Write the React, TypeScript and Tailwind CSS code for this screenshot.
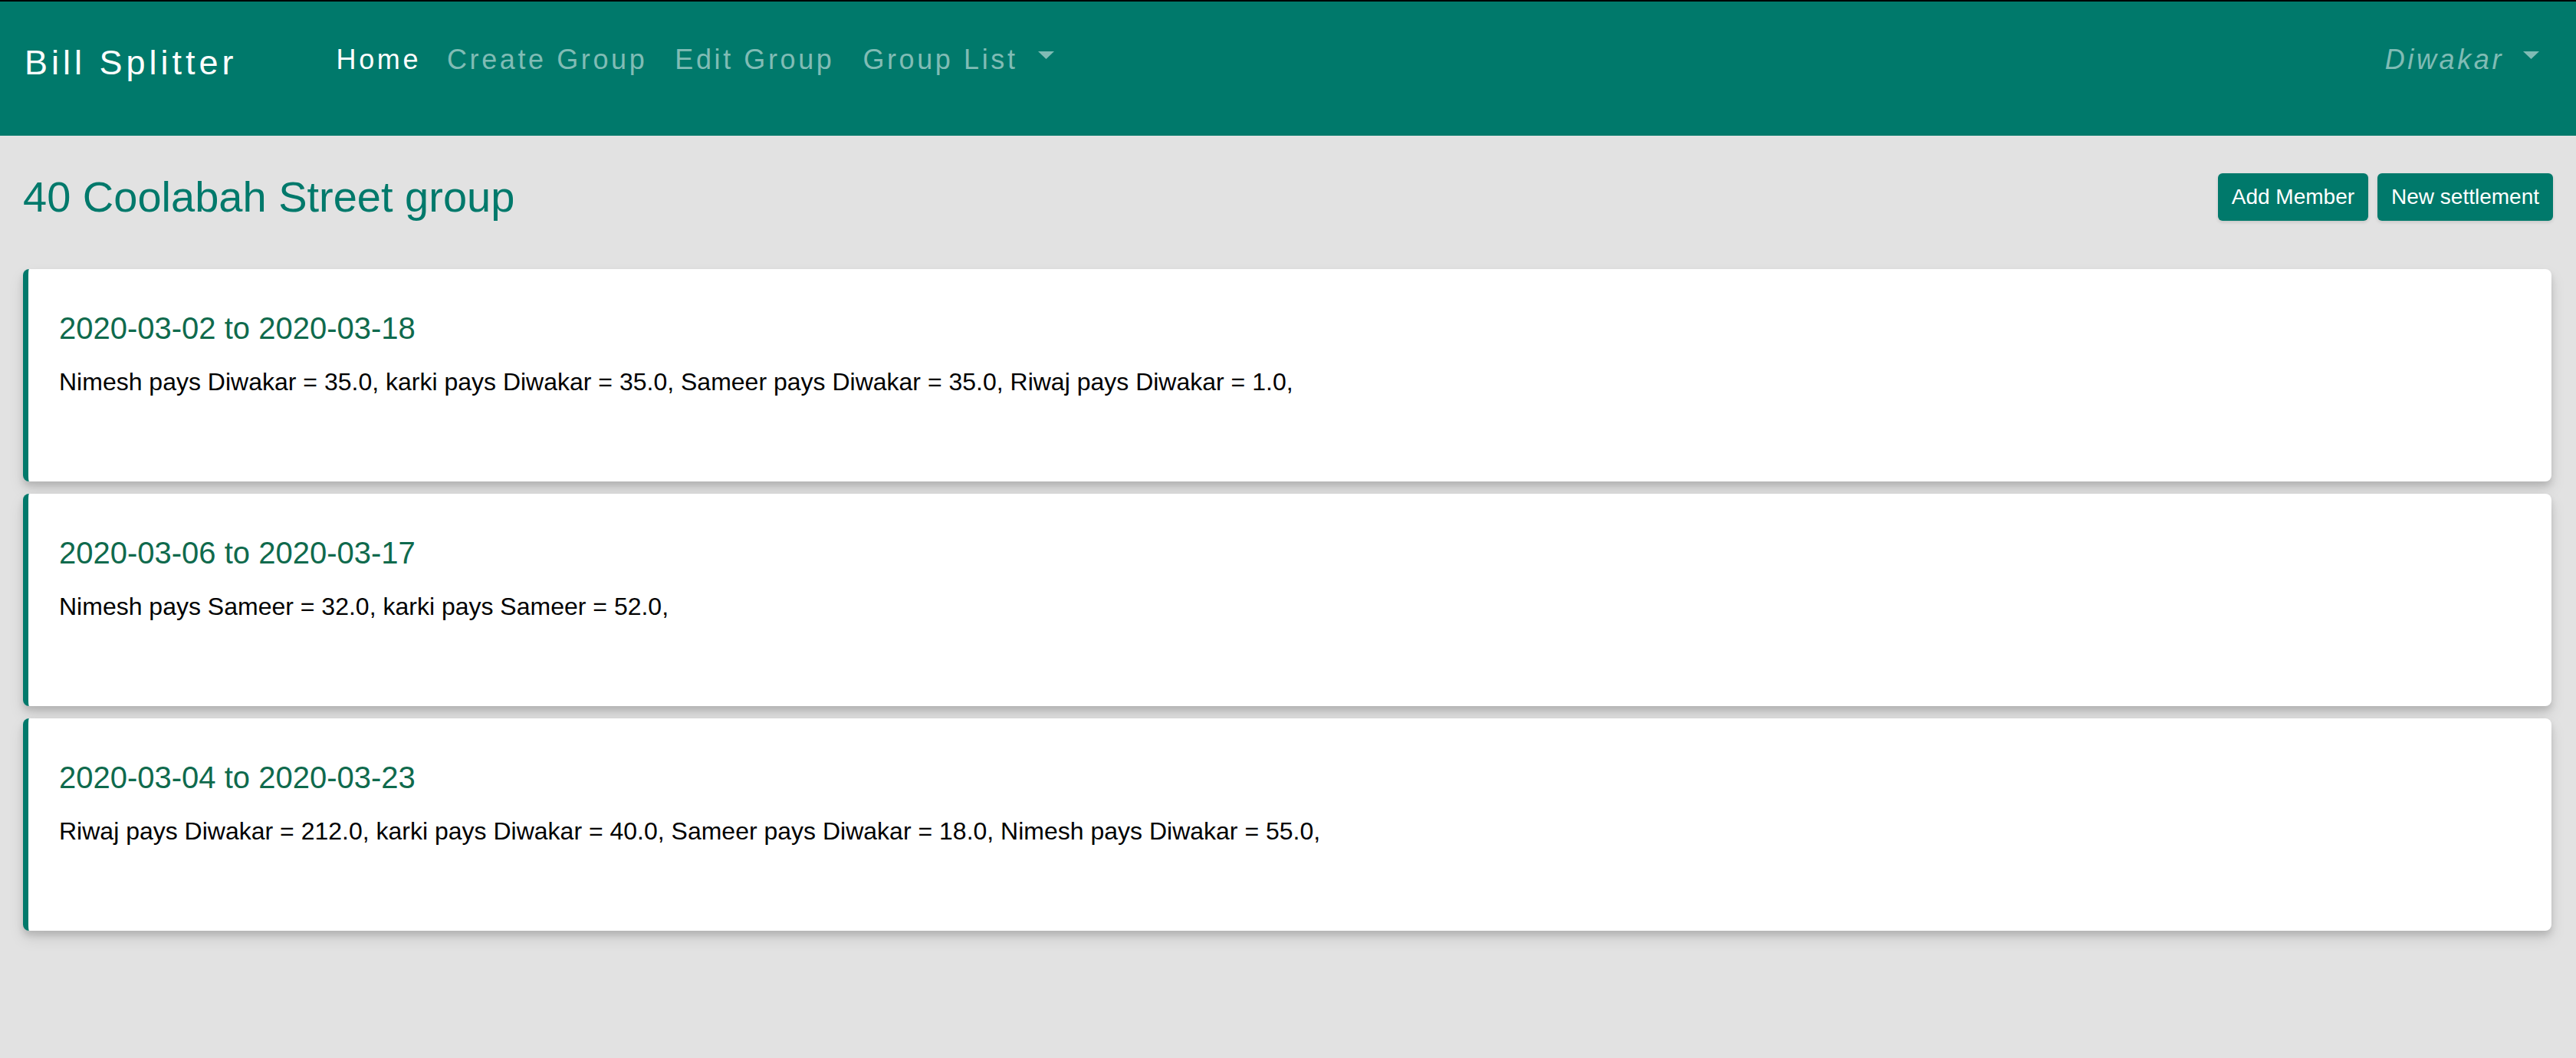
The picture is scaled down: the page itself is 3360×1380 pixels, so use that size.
import React from 'react';

interface Settlement {
  id: number;
  range: string;
  text: string;
}

const settlements: Settlement[] = [
  {
    id: 1,
    range: '2020-03-02 to 2020-03-18',
    text: 'Nimesh pays Diwakar = 35.0, karki pays Diwakar = 35.0, Sameer pays Diwakar = 35.0, Riwaj pays Diwakar = 1.0,',
  },
  {
    id: 2,
    range: '2020-03-06 to 2020-03-17',
    text: 'Nimesh pays Sameer = 32.0, karki pays Sameer = 52.0,',
  },
  {
    id: 3,
    range: '2020-03-04 to 2020-03-23',
    text: 'Riwaj pays Diwakar = 212.0, karki pays Diwakar = 40.0, Sameer pays Diwakar = 18.0, Nimesh pays Diwakar = 55.0,',
  },
];

function Caret() {
  return (
    <svg width="21" height="10" viewBox="0 0 21 10" className="ml-[25px] mt-[16px]">
      <path d="M0 0 H21 L10.5 10 Z" fill="currentColor" />
    </svg>
  );
}

export default function App() {
  return (
    <div className="min-h-[1380px] bg-[#e2e2e2] font-['Liberation_Sans',Arial,sans-serif]">
      {/* Navbar */}
      <nav className="h-[177px] border-t-2 border-black bg-[#00796b] pl-[32px] pr-[48px] pt-[46px] flex items-start">
        <span className="text-[45px] leading-[68px] tracking-[5px] text-white">Bill Splitter</span>

        <div className="flex items-start ml-[129px] mt-[3px] text-[36px] leading-[54px] tracking-[3.6px]">
          <a className="text-white">Home</a>
          <a className="ml-[34px] text-[#80bcb5]">Create Group</a>
          <a className="ml-[36px] text-[#80bcb5]">Edit Group</a>
          <div className="ml-[37px] flex items-start text-[#80bcb5]">
            <a>Group List</a>
            <span className="ml-[1px]"><Caret /></span>
          </div>
        </div>

        <div className="ml-auto mt-[3px] flex items-start text-[36px] leading-[54px] tracking-[3.6px] italic text-[#80bcb5]">
          <span>Diwakar</span>
          <Caret />
        </div>
      </nav>

      {/* Content */}
      <main className="pl-[30px] pr-[30px]">
        <div className="flex items-center justify-between mt-[46px]">
          <h3 className="text-[56px] leading-[67px] text-[#00796b]">40 Coolabah Street group</h3>
          <div className="flex gap-[12px]">
            <button
              type="button"
              className="bg-[#00796b] text-white text-[28px] leading-[42px] py-[10px] px-[18px] rounded-[6px] shadow-[0_2px_4px_rgba(0,0,0,0.12)]"
            >
              Add Member
            </button>
            <button
              type="button"
              className="bg-[#00796b] text-white text-[28px] leading-[42px] py-[10px] px-[18px] rounded-[6px] shadow-[0_2px_4px_rgba(0,0,0,0.12)]"
            >
              New settlement
            </button>
          </div>
        </div>

        <div className="mt-[61px] mr-[2px] flex flex-col gap-[16px]">
          {settlements.map((s) => (
            <div
              key={s.id}
              className="h-[277px] bg-white rounded-[8px] border-l-[7px] border-[#00796b] pl-[40px] pr-[40px] pt-[53px] shadow-[0_10px_20px_rgba(0,0,0,0.10),0_6px_8px_rgba(0,0,0,0.13)]"
            >
              <h5 className="text-[40px] leading-[48px] text-[#0f6a4d] mb-[22px]">{s.range}</h5>
              <p className="text-[32px] leading-[48px] text-black">{s.text}</p>
            </div>
          ))}
        </div>
      </main>
    </div>
  );
}
